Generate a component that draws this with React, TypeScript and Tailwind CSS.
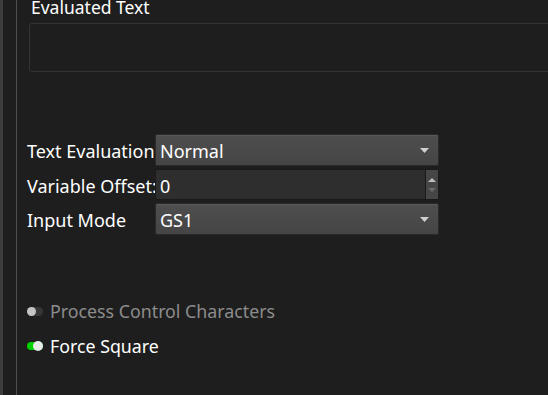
import React from 'react';

const font = { fontFamily: '"Noto Sans", "Open Sans", sans-serif' };

const Combo = ({ value }: { value: string }) => (
  <div className="flex h-[32px] w-[284px] shrink-0 items-center justify-between rounded-[2px] border border-[#2a2a2a] bg-gradient-to-b from-[#4e4e4e] to-[#454545] pl-[4px] pr-[9px] shadow-[inset_0_1px_0_#585858]">
    <span className="pt-[2px] text-[18px] leading-none text-white">{value}</span>
    <svg width="9" height="5" viewBox="0 0 9 5">
      <path d="M0 0h9L4.5 5z" fill="#d0d0d0" />
    </svg>
  </div>
);

const Spin = ({ value }: { value: string }) => (
  <div className="flex h-[31px] w-[284px] shrink-0 rounded-[2px] border border-[#1a1a1a] bg-[#2e2e2e]">
    <div className="flex flex-1 items-center pl-[4px] pt-[2px] text-[18px] leading-none text-white">{value}</div>
    <div className="flex w-[13px] flex-col items-center justify-center gap-[6px] border-l border-[#1a1a1a] bg-[#464646]">
      <svg width="8" height="4" viewBox="0 0 8 4">
        <path d="M0 4h8L4 0z" fill="#bdbdbd" />
      </svg>
      <svg width="8" height="4" viewBox="0 0 8 4">
        <path d="M0 0h8L4 4z" fill="#6a6a6a" />
      </svg>
    </div>
  </div>
);

const Row = ({ label, children }: { label: string; children: React.ReactNode }) => (
  <div className="flex items-center">
    <span className="w-[128px] shrink-0 whitespace-nowrap pt-[2px] text-[18px] leading-none text-white">{label}</span>
    {children}
  </div>
);

export default function App() {
  return (
    <div style={font} className="flex h-[395px] w-[548px] overflow-hidden bg-[#1e1e1e]">
      <div className="w-[3px] shrink-0 bg-[#3d3d3d]" />
      <div className="w-[13px] shrink-0" />
      <div className="w-[1px] shrink-0 bg-[#4e4e4e]" />
      <div className="flex min-w-0 flex-1 flex-col pl-[10px]">
        <div className="mt-[-5px] pl-[4px] text-[17.5px] leading-[24px] text-white">Evaluated Text</div>
        <div className="ml-[2px] mt-[4px] h-[49px] w-[560px] shrink-0 rounded-[3px] border border-[#333333]" />
        <div className="mt-[62px] flex flex-col gap-[3px]">
          <Row label="Text Evaluation">
            <Combo value="Normal" />
          </Row>
          <Row label="Variable Offset:">
            <Spin value="0" />
          </Row>
          <Row label="Input Mode">
            <Combo value="GS1" />
          </Row>
        </div>
        <div className="mt-[67px] flex items-center gap-[7px]">
          <div className="relative h-[9px] w-[16px] rounded-full bg-[#363636]">
            <div className="absolute left-0 top-0 h-[9px] w-[9px] rounded-full bg-[#c4c4c4]" />
          </div>
          <span className="pt-[1px] text-[17.8px] leading-none text-[#8c8c8c]">Process Control Characters</span>
        </div>
        <div className="mt-[16px] flex items-center gap-[7px]">
          <div className="relative h-[8px] w-[16px] rounded-full bg-[#00d000]">
            <div className="absolute right-0 top-[-1px] h-[10px] w-[10px] rounded-full bg-[#e8ece8]" />
          </div>
          <span className="pt-[1px] text-[17.8px] leading-none text-white">Force Square</span>
        </div>
      </div>
    </div>
  );
}
